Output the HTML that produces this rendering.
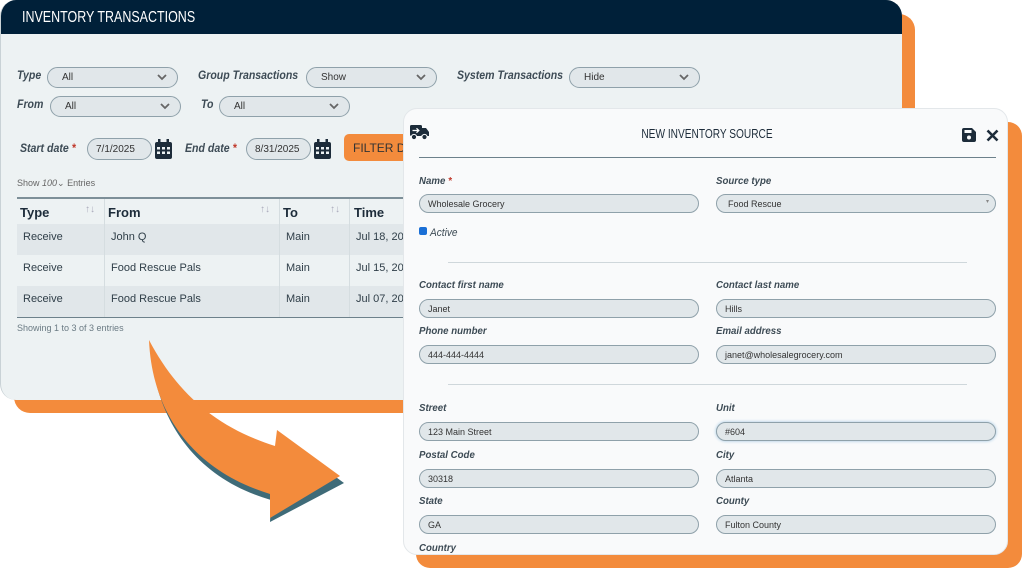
<!DOCTYPE html>
<html><head><meta charset="utf-8">
<style>
*{box-sizing:border-box;margin:0;padding:0}
body{width:1024px;height:569px;overflow:hidden;background:#fff;font-family:"Liberation Sans",sans-serif;position:relative;color:#2f3e48}
.abs{position:absolute}
.lbl{position:absolute;font-style:italic;font-size:12px;color:#3d4b55;font-weight:bold;transform:scaleX(0.88);transform-origin:left top;white-space:nowrap}
.sel{position:absolute;height:21px;border:1px solid #8fa1aa;border-radius:11px;background:#e1e7ea;font-size:10px;color:#333;padding:4px 0 0 14px}
.sel svg{position:absolute;right:10px;top:6px}
.inp{position:absolute;height:19px;border:1px solid #8fa1aa;border-radius:10px;background:#e1e7ea;font-size:9px;color:#333;padding:4px 0 0 8px}
.ml{position:absolute;font-style:italic;font-size:10.5px;color:#3d4b55;font-weight:bold;transform:scaleX(0.92);transform-origin:left top;white-space:nowrap}
.cn{transform:scaleX(0.78);white-space:nowrap}
</style></head><body>

<div class="abs" style="left:14px;top:14px;width:901px;height:399px;background:#f38b3c;border-radius:16px"></div>
<div class="abs" style="left:0;top:0;width:902px;height:400px;background:#edf2f3;border-radius:16px;overflow:hidden;border-left:1px solid #c9d2d6">
  <div class="abs" style="left:0;top:0;width:902px;height:34px;background:#002039"></div>
  <div class="abs cn" style="left:21px;top:9px;color:#fff;font-size:16px;transform-origin:left top">INVENTORY TRANSACTIONS</div>
</div>

<div class="lbl" style="left:17px;top:68px">Type</div>
<div class="sel" style="left:47px;top:67px;width:131px">All<svg width="10" height="7"><path d="M1 1l4 4 4-4" stroke="#666" stroke-width="1.8" fill="none"/></svg></div>
<div class="lbl" style="left:198px;top:68px">Group Transactions</div>
<div class="sel" style="left:306px;top:67px;width:131px">Show<svg width="10" height="7"><path d="M1 1l4 4 4-4" stroke="#666" stroke-width="1.8" fill="none"/></svg></div>
<div class="lbl" style="left:457px;top:68px">System Transactions</div>
<div class="sel" style="left:569px;top:67px;width:131px">Hide<svg width="10" height="7"><path d="M1 1l4 4 4-4" stroke="#666" stroke-width="1.8" fill="none"/></svg></div>
<div class="lbl" style="left:17px;top:97px">From</div>
<div class="sel" style="left:50px;top:96px;width:131px">All<svg width="10" height="7"><path d="M1 1l4 4 4-4" stroke="#666" stroke-width="1.8" fill="none"/></svg></div>
<div class="lbl" style="left:201px;top:97px">To</div>
<div class="sel" style="left:219px;top:96px;width:131px">All<svg width="10" height="7"><path d="M1 1l4 4 4-4" stroke="#666" stroke-width="1.8" fill="none"/></svg></div>

<div class="lbl" style="left:20px;top:141px">Start date <span style="color:#c0392b">*</span></div>
<div class="sel" style="left:87px;top:138px;width:65px;height:22px;padding:5px 0 0 8px">7/1/2025</div>
<svg class="abs" style="left:155px;top:139px" width="17" height="20" viewBox="0 0 17 20"><rect x="0" y="3" width="17" height="17" rx="2" fill="#1d2c3a"/><rect x="3" y="0" width="2.5" height="5" fill="#1d2c3a"/><rect x="11.5" y="0" width="2.5" height="5" fill="#1d2c3a"/><g fill="#edf2f3"><rect x="2" y="8" width="3" height="2.5"/><rect x="7" y="8" width="3" height="2.5"/><rect x="12" y="8" width="3" height="2.5"/><rect x="2" y="12.5" width="3" height="2.5"/><rect x="7" y="12.5" width="3" height="2.5"/><rect x="12" y="12.5" width="3" height="2.5"/></g></svg>
<div class="lbl" style="left:185px;top:141px">End date <span style="color:#c0392b">*</span></div>
<div class="sel" style="left:246px;top:138px;width:65px;height:22px;padding:5px 0 0 8px">8/31/2025</div>
<svg class="abs" style="left:314px;top:139px" width="17" height="20" viewBox="0 0 17 20"><rect x="0" y="3" width="17" height="17" rx="2" fill="#1d2c3a"/><rect x="3" y="0" width="2.5" height="5" fill="#1d2c3a"/><rect x="11.5" y="0" width="2.5" height="5" fill="#1d2c3a"/><g fill="#edf2f3"><rect x="2" y="8" width="3" height="2.5"/><rect x="7" y="8" width="3" height="2.5"/><rect x="12" y="8" width="3" height="2.5"/><rect x="2" y="12.5" width="3" height="2.5"/><rect x="7" y="12.5" width="3" height="2.5"/><rect x="12" y="12.5" width="3" height="2.5"/></g></svg>
<div class="abs" style="left:344px;top:134px;width:70px;height:27px;background:#f38b3c;border-radius:5px;color:#333;font-size:12px;padding:7px 0 0 9px">FILTER DA</div>

<div class="abs" style="left:17px;top:178px;font-size:9px;color:#666">Show <i>100</i>&#8964; Entries</div>

<div class="abs" style="left:17px;top:197px;width:400px;height:121px;border-top:2px solid #7d8f98;border-bottom:2px solid #6d818b">
  <div class="abs" style="left:0;top:25px;width:400px;height:31px;background:#e1e7ea"></div>
  <div class="abs" style="left:0;top:87px;width:400px;height:31px;background:#e1e7ea"></div>
  <div class="abs" style="left:87px;top:0;width:1px;height:118px;background:#d5dde0"></div>
  <div class="abs" style="left:262px;top:0;width:1px;height:118px;background:#d5dde0"></div>
  <div class="abs" style="left:332px;top:0;width:1px;height:118px;background:#d5dde0"></div>
  <div class="abs" style="left:3px;top:6px;font-size:13px;font-weight:bold;color:#1d2c3a">Type</div>
  <div class="abs" style="left:91px;top:6px;font-size:13px;font-weight:bold;color:#1d2c3a">From</div>
  <div class="abs" style="left:266px;top:6px;font-size:13px;font-weight:bold;color:#1d2c3a">To</div>
  <div class="abs" style="left:337px;top:6px;font-size:13px;font-weight:bold;color:#1d2c3a">Time</div>
  <div class="abs" style="left:68px;top:5px;font-size:10px;color:#aab">↑↓</div>
  <div class="abs" style="left:243px;top:5px;font-size:10px;color:#aab">↑↓</div>
  <div class="abs" style="left:313px;top:5px;font-size:10px;color:#aab">↑↓</div>
  <div class="abs" style="left:6px;top:32px;font-size:11px">Receive</div>
  <div class="abs" style="left:94px;top:32px;font-size:11px">John Q</div>
  <div class="abs" style="left:269px;top:32px;font-size:11px">Main</div>
  <div class="abs" style="left:339px;top:32px;font-size:11px">Jul 18, 20</div>
  <div class="abs" style="left:6px;top:63px;font-size:11px">Receive</div>
  <div class="abs" style="left:94px;top:63px;font-size:11px">Food Rescue Pals</div>
  <div class="abs" style="left:269px;top:63px;font-size:11px">Main</div>
  <div class="abs" style="left:339px;top:63px;font-size:11px">Jul 15, 20</div>
  <div class="abs" style="left:6px;top:94px;font-size:11px">Receive</div>
  <div class="abs" style="left:94px;top:94px;font-size:11px">Food Rescue Pals</div>
  <div class="abs" style="left:269px;top:94px;font-size:11px">Main</div>
  <div class="abs" style="left:339px;top:94px;font-size:11px">Jul 07, 20</div>
</div>
<div class="abs" style="left:17px;top:323px;font-size:9px;color:#6b7b84">Showing 1 to 3 of 3 entries</div>

<svg class="abs" style="left:0;top:0" width="420" height="569">
  <path d="M150 344 C155 420 195 478 271 500 L270 522 L344 483 L280 436 L276 452 C220 435 182 400 150 344Z" fill="#3f6b78"/>
  <path d="M149 340 C152 412 192 470 270 494 L270 518 L340 476 L277 430 L275 446 C218 428 178 395 149 340Z" fill="#f38b3c"/>
</svg>

<div class="abs" style="left:416px;top:122px;width:606px;height:446px;background:#f38b3c;border-radius:14px"></div>
<div class="abs" style="left:403px;top:108px;width:605px;height:447px;background:#f9fafb;border-radius:14px;border:1px solid #e3e7ea"></div>
<svg class="abs" style="left:410px;top:125px" width="19" height="15" viewBox="0 0 19 15"><rect x="0" y="0" width="12" height="11" rx="1.5" fill="#1d2c3a"/><path d="M12 3h4l3 4v4h-7z" fill="#1d2c3a"/><circle cx="4" cy="12" r="2.6" fill="#1d2c3a" stroke="#f9fafb" stroke-width="1"/><circle cx="14.5" cy="12" r="2.6" fill="#1d2c3a" stroke="#f9fafb" stroke-width="1"/><path d="M2.5 5.5h6M6.5 3.3l2.3 2.2-2.3 2.2" stroke="#fff" stroke-width="1.3" fill="none"/></svg>
<div class="abs cn" style="left:600px;top:126px;width:214px;text-align:center;font-size:13px;color:#1d2c3a;transform-origin:center top">NEW INVENTORY SOURCE</div>
<svg class="abs" style="left:962px;top:128px" width="14" height="14" viewBox="0 0 14 14"><path d="M0 2a2 2 0 0 1 2-2h8l4 4v8a2 2 0 0 1-2 2H2a2 2 0 0 1-2-2z" fill="#1d2c3a"/><rect x="2.5" y="2" width="7" height="3" fill="#f9fafb"/><circle cx="7" cy="9.5" r="2" fill="#f9fafb"/></svg>
<svg class="abs" style="left:986px;top:129px" width="13" height="13"><path d="M1.5 1.5l10 10M11.5 1.5l-10 10" stroke="#1d2c3a" stroke-width="2.6"/></svg>
<div class="abs" style="left:419px;top:157px;width:577px;height:1px;background:#6d818b"></div>

<div class="ml" style="left:419px;top:175px">Name <span style="color:#c0392b">*</span></div>
<div class="ml" style="left:716px;top:175px">Source type</div>
<div class="inp" style="left:419px;top:194px;width:280px">Wholesale Grocery</div>
<div class="inp" style="left:716px;top:194px;width:280px;padding-left:11px">Food Rescue<span style="position:absolute;right:6px;top:3px;font-size:6px;color:#888">▾</span></div>
<div class="abs" style="left:419px;top:227px;width:8px;height:8px;background:#1a6fd6;border-radius:2px"></div>
<div class="ml" style="left:430px;top:227px;font-weight:normal;font-size:11px">Active</div>
<div class="abs" style="left:448px;top:262px;width:519px;height:1px;background:#cfd7db"></div>

<div class="ml" style="left:419px;top:279px">Contact first name</div>
<div class="ml" style="left:716px;top:279px">Contact last name</div>
<div class="inp" style="left:419px;top:299px;width:280px">Janet</div>
<div class="inp" style="left:716px;top:299px;width:280px">Hills</div>
<div class="ml" style="left:419px;top:325px">Phone number</div>
<div class="ml" style="left:716px;top:325px">Email address</div>
<div class="inp" style="left:419px;top:345px;width:280px">444-444-4444</div>
<div class="inp" style="left:716px;top:345px;width:280px">janet@wholesalegrocery.com</div>
<div class="abs" style="left:448px;top:384px;width:519px;height:1px;background:#cfd7db"></div>

<div class="ml" style="left:419px;top:402px">Street</div>
<div class="ml" style="left:716px;top:402px">Unit</div>
<div class="inp" style="left:419px;top:422px;width:280px">123 Main Street</div>
<div class="inp" style="left:716px;top:422px;width:280px;box-shadow:0 0 3px #9cc3e0">#604</div>
<div class="ml" style="left:419px;top:449px">Postal Code</div>
<div class="ml" style="left:716px;top:449px">City</div>
<div class="inp" style="left:419px;top:469px;width:280px">30318</div>
<div class="inp" style="left:716px;top:469px;width:280px">Atlanta</div>
<div class="ml" style="left:419px;top:495px">State</div>
<div class="ml" style="left:716px;top:495px">County</div>
<div class="inp" style="left:419px;top:515px;width:280px">GA</div>
<div class="inp" style="left:716px;top:515px;width:280px">Fulton County</div>
<div class="ml" style="left:419px;top:542px">Country</div>
</body></html>
